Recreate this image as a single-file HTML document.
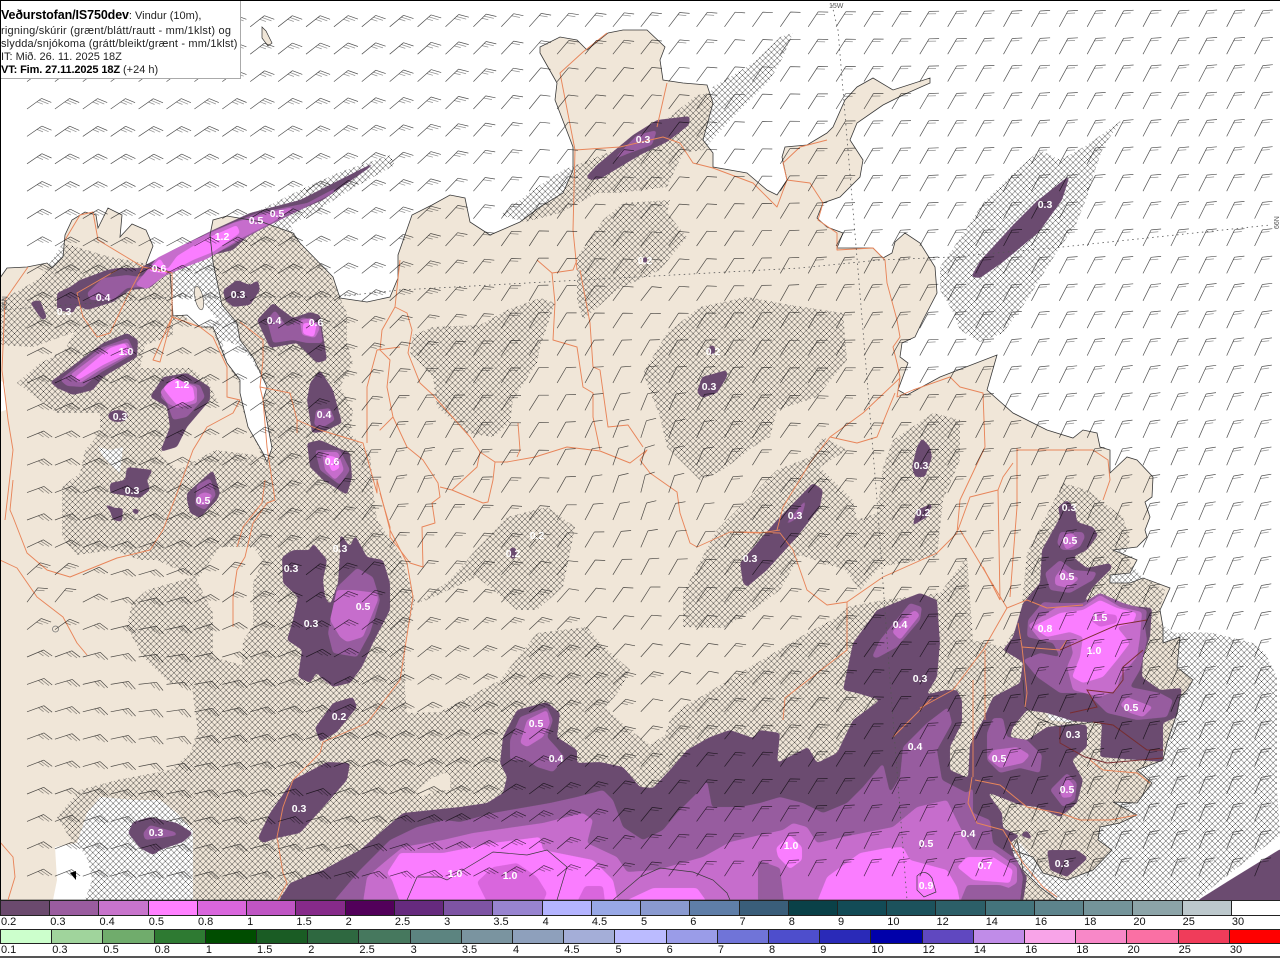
<!DOCTYPE html>
<html lang="is">
<head>
<meta charset="utf-8">
<title>Veðurstofan/IS750dev</title>
<style>
html,body{margin:0;padding:0;background:#fff;width:1280px;height:958px;overflow:hidden}
#wrap{position:relative;width:1280px;height:958px;overflow:hidden;font-family:"Liberation Sans",sans-serif}
#map{position:absolute;left:0;top:0}
#info{position:absolute;left:1px;top:1px;width:240px;height:78px;background:#fff;border-right:1px solid #aaa;border-bottom:1px solid #aaa;font-size:11px;line-height:13px;color:#222;box-sizing:border-box;white-space:nowrap}
#info div{position:absolute;left:0}
#info b.h{font-size:12.5px;color:#000;letter-spacing:-.1px}
.sw{position:absolute;left:0;width:1280px;display:flex;box-sizing:border-box;border-top:1px solid #222;border-bottom:1px solid #222}
.sw i{flex:1;display:block;border-left:1px solid #222;box-sizing:border-box}
.lb{position:absolute;left:0;width:1280px;display:flex;font-size:11px;line-height:13px;color:#111}
.lb span{flex:1;display:block;padding-left:1px;box-sizing:border-box}
#bl{position:absolute;left:0;top:956px;width:1280px;height:2px;background:#555}
text.v{font:bold 10.5px "Liberation Sans",sans-serif;fill:#fff;text-anchor:middle}
text.g{font:7px "Liberation Sans",sans-serif;fill:#555}
.l2{fill:#6b4b70}.l3{fill:#975c9f}.l4{fill:#c66dcc}.l5{fill:#fa7dff}.l8{fill:#d966dd}
.road{fill:none;stroke:#e8855a;stroke-width:.95;stroke-linejoin:round}
</style>
</head>
<body>
<div id="wrap">
<svg id="map" width="1280" height="900" viewBox="0 0 1280 900" xmlns="http://www.w3.org/2000/svg">
<defs>
<pattern id="hx" width="5.8" height="5.8" patternUnits="userSpaceOnUse">
<path d="M0 0L5.8 5.8M5.8 0L0 5.8" stroke="#1e1e1e" stroke-width=".46" fill="none"/>
</pattern>
<filter id="sm" filterUnits="userSpaceOnUse" x="0" y="0" width="1280" height="900" color-interpolation-filters="sRGB">
<feGaussianBlur stdDeviation="1.5"/>
<feComponentTransfer><feFuncA type="linear" slope="7" intercept="-3"/></feComponentTransfer>
</filter>
<path id="land" d="M0,278 7,268 27,267 47,263 52,268 63,257 65,235 72,220 85,212 96,215 98,228 108,208 122,215 120,237 132,224 146,230 153,246 146,264 170,272 172,300 173,316 187,315 200,327 213,327 223,353 227,363 240,380 240,393 248,427 263,453 267,462 272,448 263,400 267,387 253,357 240,340 237,323 222,305 213,262 210,235 213,220 227,216 262,222 293,233 300,243 333,277 340,298 367,302 390,297 398,278 398,255 412,215 432,205 450,195 465,198 470,222 490,235 520,222 540,207 563,193 573,170 573,147 555,100 557,83 540,53 540,47 560,37 577,40 587,50 608,33 623,30 647,30 665,47 660,60 663,80 683,83 707,85 713,103 703,140 713,153 713,167 747,173 767,190 777,195 787,180 782,157 785,147 807,145 827,133 833,127 845,100 857,87 873,78 893,90 930,78 930,83 903,95 883,105 857,123 850,140 863,160 860,177 840,197 823,203 817,218 827,227 843,233 837,248 873,248 883,258 892,253 895,242 905,233 920,243 935,267 937,293 923,320 915,337 902,343 900,357 908,363 898,390 907,395 940,377 997,355 987,390 1013,413 1047,430 1073,438 1083,430 1097,433 1100,447 1110,450 1110,473 1127,457 1137,460 1153,477 1152,497 1145,502 1150,517 1145,530 1147,537 1137,547 1113,550 1137,560 1130,573 1110,575 1110,583 1130,583 1143,578 1170,588 1160,610 1163,627 1163,643 1180,637 1177,667 1193,680 1187,690 1180,697 1177,713 1167,743 1163,760 1137,770 1152,783 1137,803 1113,802 1137,815 1120,823 1100,827 1098,840 1112,850 1093,870 1067,880 1043,873 1033,857 1012,850 1017,840 1023,870 1040,887 1057,900 0,900Z"/>
</defs>

<rect width="1280" height="900" fill="#fff"/>
<use href="#land" fill="#f0e6d8"/>
<polygon points="262,27 266,31 272,43 268,46 262,38" fill="#f0e6d8" stroke="#333" stroke-width=".7"/>
<polygon points="1047,713 1073,720 1073,723 1050,720" fill="#fff"/>
<polygon points="1010,845 1020,843 1030,855 1040,880 1030,875 1015,860" fill="#fff"/>
<!-- glacier -->
<polygon points="87,813 100,797 133,800 160,800 177,813 193,830 193,900 53,900 57,880 55,847 77,843" fill="#fff"/>
<polygon points="98,447 110,450 123,447 120,473 113,467 104,458" fill="#fff"/>

<!-- hatching -->
<g fill="url(#hx)">
<polygon points="0,300 20,290 40,278 63,243 110,257 143,263 173,273 187,257 210,240 250,215 300,190 340,172 390,155 395,165 350,190 310,215 290,225 300,243 330,275 347,313 347,343 353,363 340,387 353,410 350,433 370,453 373,490 377,520 400,553 415,600 405,640 405,690 407,713 440,712 500,680 537,633 587,627 600,643 630,670 620,690 605,708 630,730 650,745 665,735 670,720 683,707 707,693 750,667 807,633 837,617 847,607 883,600 940,593 967,557 973,640 1003,647 1020,623 1027,553 1063,483 1087,490 1123,517 1130,540 1125,555 1140,575 1165,590 1157,620 1173,633 1193,632 1213,633 1253,643 1265,653 1277,677 1277,790 1280,835 1215,885 1197,900 0,900"/>
<polygon points="413,335 433,327 480,325 507,310 540,298 555,303 540,347 537,363 513,400 510,423 493,437 467,433 437,407 433,377 410,353"/>
<polygon points="623,203 670,200 667,213 687,237 660,270 617,290 583,320 577,300 577,257 603,220"/>
<polygon points="643,373 667,333 700,307 747,297 790,305 843,313 847,360 817,397 777,410 770,437 753,447 723,470 700,480 667,447 660,417"/>
<polygon points="450,580 473,553 507,517 547,507 575,527 570,553 563,587 537,610 517,610 493,590 477,577 427,600 417,603"/>
<polygon points="683,627 683,593 717,530 777,470 810,457 823,437 847,450 820,467 853,500 857,520 877,513 883,467 893,440 933,413 960,420 960,460 943,500 937,557 880,567 860,590 845,570 800,555 780,590 753,610 723,628"/>
<polygon points="1122,120 1087,145 1060,160 1040,150 1017,170 983,203 970,223 952,250 940,267 940,290 952,310 960,330 980,342 1003,333 1027,300 1060,247 1075,227 1087,197 1093,177 1103,147"/>
<polygon points="793,33 780,37 753,63 713,87 710,93 697,95 657,127 623,147 563,170 540,185 500,215 525,222 560,213 597,193 617,193 667,187 683,153 703,150 737,113 770,80 783,57"/>
</g>
<!-- un-hatched land -->
<g fill="#f0e6d8">
<polygon points="0,345 33,347 75,332 63,352 40,363 17,383 57,413 100,413 100,433 85,450 80,473 62,487 62,537 77,555 113,550 140,560 157,560 193,577 147,590 132,603 127,627 143,657 170,683 192,687 198,733 190,753 170,770 117,780 80,790 57,817 73,843 73,900 0,900"/>
<polygon points="220,547 253,547 263,560 253,583 253,627 243,640 242,665 213,657 213,613 197,580"/>
<polygon points="173,322 190,320 213,332 225,360 240,385 245,405 227,420 207,380 190,368 140,368 145,345 173,335"/>
<polygon points="200,403 240,403 255,440 268,470 255,455 215,450 178,470 160,455 165,445"/>
<polygon points="417,790 432,778 445,773 450,775 450,790 440,790 420,797"/>
</g>
<!-- un-hatched water -->
<g fill="#fff">
<polygon points="173,297 200,297 217,320 210,326 197,325 183,315 173,315"/>
<polygon points="222,340 237,345 252,360 267,387 263,400 272,448 267,462 263,453 248,427 240,393 240,380 227,363"/>
<polygon points="55,847 77,843 88,860 92,880 85,900 53,900 57,880"/>
<polygon points="0,380 5,384 6,410 0,412"/>
</g>
<ellipse cx="199" cy="298" rx="4" ry="12" transform="rotate(-12 199 298)" fill="#f0e6d8" stroke="#444" stroke-width=".6"/>
<polygon points="70,873 76,871 76,880" fill="#000"/>
<circle cx="55.500" cy="629" r="3" fill="none" stroke="#777" stroke-width=".8"/>

<!-- precipitation -->
<g class="l2" filter="url(#sm)">
<polygon points="278,902 290,883 323,870 360,850 403,813 460,807 487,803 503,793 507,777 500,763 503,737 517,710 547,702 560,713 557,737 577,750 577,763 600,762 623,767 640,787 653,788 670,770 687,750 710,737 730,730 753,738 760,730 780,733 777,763 808,747 817,763 837,753 853,720 880,700 857,693 843,690 853,643 877,610 920,593 937,600 940,643 937,677 923,700 905,725 898,738 917,710 925,695 945,690 957,690 962,700 962,723 950,747 950,770 968,778 970,745 983,720 993,697 1020,683 1023,662 1003,650 1013,637 1023,603 1040,583 1042,550 1057,523 1060,517 1058,507 1067,500 1075,508 1077,522 1093,527 1098,535 1087,550 1073,557 1087,568 1110,563 1112,568 1093,587 1083,603 1100,593 1123,605 1152,608 1150,637 1143,657 1142,677 1160,690 1182,688 1177,717 1163,723 1163,762 1100,757 1102,723 1073,721 1047,713 1027,710 1013,727 1010,737 1027,740 1047,727 1073,724 1087,725 1087,747 1072,760 1083,780 1077,803 1060,817 1037,807 1020,805 987,792 1002,813 1003,828 1013,833 1033,840 1027,830 1010,843 1015,858 1027,877 1023,902"/>
<polygon points="1047,850 1077,850 1088,858 1067,877 1050,870"/>
<polygon points="1282,848 1230,880 1195,902 1282,902"/>
<polygon points="57,293 70,287 80,280 107,270 118,268 140,268 173,250 213,230 250,213 300,200 375,162 372,166 323,200 277,220 247,237 233,250 200,258 167,273 150,288 130,290 113,302 87,310 77,305 73,313 57,310"/>
<polygon points="50,382 67,370 103,343 127,333 138,340 137,357 103,377 93,390 73,395 57,388"/>
<polygon points="150,397 163,377 187,373 210,387 210,400 187,427 177,447 160,452 170,427 167,407"/>
<polygon points="223,290 237,280 250,285 258,280 260,290 250,305 233,307 225,300"/>
<polygon points="257,320 273,303 293,318 310,312 320,315 327,360 317,363 297,343 270,348 263,333"/>
<polygon points="320,370 333,390 342,423 323,432 312,433 307,400 310,383"/>
<polygon points="307,443 320,440 350,453 352,477 347,495 323,480 310,467"/>
<polygon points="110,483 125,480 127,467 153,470 147,480 150,490 140,498 110,493"/>
<polygon points="103,503 115,508 123,508 122,522 113,520 110,511"/>
<polygon points="132,508 140,510 137,515 133,513"/>
<ellipse cx="118" cy="416" rx="10" ry="6"/>
<polygon points="187,493 213,470 220,493 217,500 200,518 190,513 187,500"/>
<polygon points="30,302 40,300 47,318 42,320 33,307"/>
<polygon points="282,557 293,550 310,550 313,543 327,560 323,580 325,597 330,605 338,583 340,553 340,533 350,547 355,535 367,557 383,560 390,583 390,610 373,643 362,667 350,683 333,687 320,677 317,672 310,683 298,677 302,650 287,640 293,620 298,597 283,583"/>
<polygon points="315,728 333,703 353,697 357,707 337,732 320,742"/>
<polygon points="258,838 270,813 293,780 327,762 350,763 347,780 327,803 300,833 277,838 263,843"/>
<polygon points="128,833 133,822 150,817 177,823 193,833 183,842 160,850 153,855 140,848"/>
<polygon points="697,392 702,377 727,370 727,377 717,393 702,398"/>
<ellipse cx="712" cy="350" rx="3.500" ry="5"/>
<ellipse cx="645" cy="260" rx="2.500" ry="3.500"/>
<ellipse cx="513" cy="553" rx="4" ry="6"/>
<polygon points="586,177 597,165 633,135 657,120 690,116 689,125 667,142 640,155 600,179 590,180"/>
<polygon points="971,277 980,261 1013,225 1037,201 1070,175 1062,200 1039,232 1003,262 980,278"/>
<polygon points="917,447 922,438 930,447 932,457 925,477 915,477 912,467"/>
<polygon points="912,527 917,510 933,503 927,517 917,523"/>
<polygon points="743,583 740,563 777,520 813,483 823,490 820,507 797,537 767,570 747,587"/>
</g>
<g class="l3" filter="url(#sm)">
<polygon points="333,902 360,870 390,840 417,827 445,820 460,822 493,813 550,803 577,797 603,790 613,800 623,827 643,840 663,830 677,813 697,793 707,780 712,807 740,807 760,803 780,797 803,803 823,813 847,803 863,787 883,763 890,793 900,777 903,747 927,723 948,707 952,723 937,750 942,780 967,793 973,787 973,813 990,820 993,843 1017,860 1023,877 1020,902"/>
<polygon points="90,300 87,293 103,278 127,275 140,277 173,257 207,233 257,213 307,203 345,183 330,195 260,230 227,248 190,265 167,275 143,287 127,288 113,300"/>
<polygon points="60,380 100,348 128,338 135,353 100,373 83,387 67,386"/>
<polygon points="160,397 170,380 200,385 205,397 187,417 173,420 167,403"/>
<polygon points="267,320 275,310 287,327 303,317 320,323 323,343 307,343 293,340 273,343"/>
<polygon points="316,410 330,408 335,420 322,428 314,425"/>
<polygon points="315,450 340,450 350,470 340,485 320,470"/>
<polygon points="197,485 210,478 216,495 205,510 195,505"/>
<polygon points="328,633 337,587 357,568 373,577 380,600 370,633 357,657 333,653"/>
<polygon points="143,833 150,825 175,832 178,835 160,838 145,840"/>
<polygon points="510,760 510,740 520,717 547,707 553,720 547,737 557,748 565,758 553,772 537,767 527,760"/>
<polygon points="872,657 880,640 910,603 922,607 920,620 897,647 877,658"/>
<polygon points="1057,543 1060,532 1083,532 1085,537 1080,547 1073,550 1062,550"/>
<polygon points="1045,573 1060,560 1073,570 1097,572 1093,580 1070,593 1050,590"/>
<polygon points="1028,620 1043,602 1057,603 1083,603 1100,593 1123,603 1147,610 1145,627 1147,640 1140,670 1130,687 1160,693 1173,700 1167,717 1137,720 1107,713 1087,693 1060,693 1037,677 1023,660 1040,653 1060,657 1053,643 1027,637"/>
<polygon points="987,733 993,718 1003,718 1007,737 1027,740 1042,755 1040,773 1020,768 1000,773 987,760"/>
<polygon points="1050,790 1067,773 1077,783 1075,800 1063,807"/>
<polygon points="613,160 637,135 657,130 652,145 627,154"/>
<polygon points="783,527 807,498 802,515"/>
</g>
<g class="l4" filter="url(#sm)">
<polygon points="363,902 367,877 387,860 403,847 443,840 473,833 543,823 583,813 593,820 587,843 617,857 627,872 657,870 703,857 730,842 760,835 783,830 793,823 807,827 817,843 843,837 893,827 917,807 947,800 960,827 973,850 993,850 1017,867 1017,883 993,897 993,902"/>
<polygon points="135,285 157,258 187,243 233,223 267,213 297,206 273,222 240,239 207,259 167,274 147,289"/>
<polygon points="70,375 107,347 128,342 132,353 100,370 80,383"/>
<polygon points="160,392 173,377 197,387 197,403 177,408 167,403"/>
<polygon points="300,320 312,318 320,328 315,338 302,335"/>
<polygon points="322,452 338,452 344,470 335,480 325,470"/>
<polygon points="198,495 205,492 213,495 206,505 198,505"/>
<polygon points="330,620 337,590 353,590 377,593 378,600 363,637 347,642 340,637"/>
<polygon points="520,743 527,720 547,710 550,723 543,737 527,747"/>
<polygon points="892,632 905,617 915,610 920,615 900,640"/>
<polygon points="1062,540 1068,532 1075,535 1076,545 1066,550"/>
<polygon points="1055,577 1062,568 1070,575 1080,578 1068,588 1055,585"/>
<polygon points="1028,625 1057,607 1083,607 1100,595 1120,607 1142,612 1140,637 1137,657 1120,677 1117,690 1100,697 1073,690 1067,667 1073,653 1070,640 1040,640"/>
<polygon points="1120,705 1127,697 1153,707 1143,717 1130,713"/>
<polygon points="987,758 993,750 1017,747 1030,755 1023,763 1000,768"/>
<polygon points="1060,790 1067,778 1074,785 1072,797 1062,798"/>
</g>
<g class="l3" filter="url(#sm)">
<polygon points="758,860 780,868 784,902 758,902"/>
<polygon points="960,902 967,885 1000,885 1015,890 1018,902"/>
</g>
<g class="l5" filter="url(#sm)">
<polygon points="400,902 392,880 387,873 400,853 443,853 493,843 540,837 543,850 593,860 613,880 618,902"/>
<polygon points="623,902 653,888 697,888 707,902"/>
<polygon points="817,902 827,877 860,853 887,848 903,847 910,860 947,870 957,887 960,902"/>
<polygon points="957,867 967,857 993,857 1013,870 1010,883 973,880"/>
<polygon points="776,848 790,835 802,847 802,860 790,869 778,857"/>
<polygon points="148,271 160,258 167,270 177,256 203,240 237,225 240,233 213,252 193,260 167,274"/>
<polygon points="73,379 110,348 125,343 130,352 103,365 80,379"/>
<polygon points="163,388 175,378 193,387 195,400 177,405 170,397"/>
<polygon points="303,323 317,323 314,337 303,334"/>
<polygon points="325,455 336,457 340,468 332,472"/>
<polygon points="1032,627 1060,613 1083,610 1100,600 1117,608 1137,613 1133,623 1117,627 1130,643 1117,660 1103,677 1083,683 1072,677 1080,657 1083,637 1070,632 1047,637"/>
</g>
<g class="l8" filter="url(#sm)">
<polygon points="477,882 493,867 517,863 537,877 547,893 543,902 487,902"/>
<polygon points="577,902 585,886 603,886 605,902"/>
<polygon points="1090,620 1100,613 1117,615 1117,623 1100,627"/>
</g>

<!-- coast -->
<use href="#land" fill="none" stroke="#3a3a3a" stroke-width=".8"/>
<g fill="none" stroke="#3a3a3a" stroke-width=".7">
<polyline points="407,900 417,877 440,877 447,880 463,870 493,852 527,855 547,850 567,867 557,900"/>
<polyline points="613,900 640,877 660,868 693,872 713,880 727,893 730,900"/>
<path d="M917,876Q925,868 932,878L936,892 924,897 917,890Z"/>
<polyline points="1023,680 1025,707 1037,718 1060,727 1093,722 1113,725 1147,750 1163,750"/>
</g>

<!-- roads -->
<g class="road">
<polyline points="28,267 5,300 2,370 8,420 13,450 5,520"/>
<polyline points="65,240 80,215 93,212 98,240 143,267 172,273 172,317 153,360 160,362 172,317 200,327 213,337 227,367 227,397 240,400 233,413 207,427 193,450 182,480 163,530 150,550 117,558 70,577 47,570 27,553 13,517 10,510 13,480"/>
<polyline points="143,267 127,297 110,333 97,337 83,317 77,293 117,270"/>
<polyline points="0,560 17,568 37,597 63,617 77,643 87,655"/>
<polyline points="240,322 263,340 263,360 260,387 263,400 267,447 270,467 275,500 267,503 253,523 245,557 237,570 233,597 233,627"/>
<polyline points="265,480 262,503 243,527 237,547"/>
<polyline points="260,387 290,393 297,420 297,433"/>
<polyline points="297,420 320,430 363,443 377,493 377,480 390,530 407,563 413,597 400,680 367,723 323,742 320,753 293,780 283,807 277,837 283,873 287,883 278,900"/>
<polyline points="367,443 367,387 377,350 400,347"/>
<polyline points="400,260 395,307 382,330 380,350 390,360 387,387 393,417 380,430 393,417 407,447 423,460 438,483 440,497 432,503 435,523 422,527 423,567 410,563 390,537 390,527 380,493"/>
<polyline points="395,307 407,313 412,330 408,353 420,383 433,395 470,437 480,452 495,462 507,462 535,457 567,447 600,451 630,463 647,450 640,460 650,473 677,492 680,513 690,543 697,547 730,532 760,533 780,530"/>
<polyline points="495,462 493,480 488,502 483,503 452,490 440,487"/>
<polyline points="480,452 477,467 452,490"/>
<polyline points="518,423 520,450 517,457"/>
<polyline points="537,260 552,273 573,270 577,260"/>
<polyline points="552,273 555,303 553,340 577,347 583,387 593,393 593,417 600,450"/>
<polyline points="580,270 590,323 593,367 600,370 608,427 628,425 643,447"/>
<polyline points="577,270 573,230 575,150 560,73 583,52 607,33"/>
<polyline points="575,150 620,147 663,137 680,143 693,163 713,168 753,183 777,207 787,180 783,163 800,147 827,140"/>
<polyline points="667,83 657,127"/>
<polyline points="787,180 810,183 823,203 818,220 837,233 837,250 873,248 885,260 887,283 897,320 900,337 893,347 897,363 900,377 897,397 913,390 950,377 960,387 983,393 985,447 960,500 957,533 937,553 883,577 847,602 827,605 807,590 793,550 780,533 740,532"/>
<polyline points="895,393 877,437 857,443 830,437 810,463 783,507 777,530"/>
<polyline points="900,378 863,413 830,437"/>
<polyline points="960,530 1007,608 1027,600 1047,608 1083,605"/>
<polyline points="983,567 1000,600"/>
<polyline points="998,490 970,497 958,530"/>
<polyline points="1017,450 1093,450 1108,460 1110,480 1103,500"/>
<polyline points="1017,448 1017,507 1010,597"/>
<polyline points="1013,463 1003,477 998,490 1000,600"/>
<polyline points="1018,623 1022,647 1060,650 1067,640"/>
<polyline points="1022,647 1027,693 1025,707"/>
<polyline points="783,720 785,698 847,650 847,602"/>
<polyline points="893,737 933,697"/>
<polyline points="973,680 973,777"/>
<polyline points="920,708 953,690 983,650 1007,608"/>
<polyline points="985,650 985,720"/>
<polyline points="972,777 968,803 977,823 1003,830 1023,863 1043,887 1057,897"/>
<polyline points="975,780 1000,785 1027,807 1060,813 1080,820 1110,820 1137,815"/>
<polyline points="1090,760 1103,770 1137,773 1150,783"/>
<polyline points="0,842 13,857 15,877 8,900"/>
</g>
<g fill="none" stroke="#7a2c30" stroke-width=".95">
<polyline points="1060,650 1117,625 1147,620"/>
<polyline points="1143,650 1123,667 1123,680 1113,693 1087,690 1097,707 1070,713"/>
<polyline points="1060,727 1060,743 1085,757 1107,763 1163,758"/>
<polyline points="1093,722 1113,725 1147,750 1163,750"/>
</g>

<!-- graticule -->
<g fill="none" stroke="#555" stroke-width=".8" stroke-dasharray="1.500 3.500">
<polyline points="0,310 173,297 333,297 400,290 800,268 880,260 952,257 1062,247 1270,225"/>
<polyline points="832,5 838,30 863,330 877,500 890,680 907,900"/>
</g>

<!-- wind barbs -->
<g id="barbs" fill="none" stroke-linecap="butt"></g>

<!-- labels -->
<g>
<text class="v" x="643" y="143">0.3</text><text class="v" x="1045" y="208">0.3</text><text class="v" x="277" y="217">0.5</text><text class="v" x="256" y="224">0.5</text><text class="v" x="222" y="240">1.2</text><text class="v" x="159" y="272">0.6</text><text class="v" x="103" y="301">0.4</text><text class="v" x="64" y="315">0.3</text><text class="v" x="238" y="298">0.3</text><text class="v" x="274" y="324">0.4</text><text class="v" x="316" y="326">0.6</text><text class="v" x="126" y="355">1.0</text><text class="v" x="182" y="388">1.2</text><text class="v" x="120" y="420">0.3</text><text class="v" x="324" y="418">0.4</text><text class="v" x="332" y="465">0.6</text><text class="v" x="132" y="494">0.3</text><text class="v" x="203" y="504">0.5</text><text class="v" x="709" y="390">0.3</text><text class="v" x="713" y="355">0.2</text><text class="v" x="645" y="264">0.2</text><text class="v" x="921" y="469">0.3</text><text class="v" x="923" y="516">0.2</text><text class="v" x="795" y="519">0.3</text><text class="v" x="750" y="562">0.3</text><text class="v" x="1069" y="511">0.3</text><text class="v" x="1070" y="544">0.5</text><text class="v" x="1067" y="580">0.5</text><text class="v" x="1045" y="632">0.8</text><text class="v" x="1100" y="621">1.5</text><text class="v" x="1094" y="654">1.0</text><text class="v" x="1131" y="711">0.5</text><text class="v" x="1073" y="738">0.3</text><text class="v" x="999" y="762">0.5</text><text class="v" x="1067" y="793">0.5</text><text class="v" x="1062" y="867">0.3</text><text class="v" x="900" y="628">0.4</text><text class="v" x="920" y="682">0.3</text><text class="v" x="915" y="750">0.4</text><text class="v" x="968" y="837">0.4</text><text class="v" x="926" y="847">0.5</text><text class="v" x="791" y="849">1.0</text><text class="v" x="985" y="869">0.7</text><text class="v" x="926" y="889">0.9</text><text class="v" x="510" y="879">1.0</text><text class="v" x="455" y="877">1.0</text><text class="v" x="299" y="812">0.3</text><text class="v" x="156" y="836">0.3</text><text class="v" x="339" y="720">0.2</text><text class="v" x="536" y="727">0.5</text><text class="v" x="556" y="762">0.4</text><text class="v" x="291" y="572">0.3</text><text class="v" x="340" y="552">0.3</text><text class="v" x="363" y="610">0.5</text><text class="v" x="311" y="627">0.3</text><text class="v" x="513" y="557">0.2</text><text class="v" x="537" y="539">0.2</text>
<text class="g" x="829" y="8">15W</text>
<text class="g" transform="translate(1279,229) rotate(-90)">66N</text>
<text class="g" transform="translate(7,309) rotate(-90)">66N</text>
</g>
<rect x="0" y="0" width="1280" height="1" fill="#000"/>
<rect x="0" y="0" width="1" height="900" fill="#000"/>
</svg>

<div id="info">
<div style="top:8px"><b class="h">Veðurstofan/IS750dev</b>: Vindur (10m),</div>
<div style="top:24px;letter-spacing:.21px">rigning/skúrir (grænt/blátt/rautt - mm/1klst) og</div>
<div style="top:37px;letter-spacing:.17px">slydda/snjókoma (grátt/bleikt/grænt - mm/1klst)</div>
<div style="top:50px">IT: Mið. 26. 11. 2025 18Z</div>
<div style="top:63px"><b style="color:#000;letter-spacing:-.12px">VT: Fim. 27.11.2025 18Z</b> (+24 h)</div>
</div>

<div class="sw" style="top:900px;height:16px">
<i style="background:#6b4a6e"></i><i style="background:#9a5c9f"></i><i style="background:#c874cc"></i><i style="background:#ff80ff"></i><i style="background:#d966dd"></i><i style="background:#bf55c4"></i><i style="background:#862a8a"></i><i style="background:#52005a"></i><i style="background:#662a7e"></i><i style="background:#7e54a4"></i><i style="background:#9884d0"></i><i style="background:#b4b4ff"></i><i style="background:#98a8e6"></i><i style="background:#8a9ad0"></i><i style="background:#5f7ea8"></i><i style="background:#3a5e7a"></i><i style="background:#0a4148"></i><i style="background:#124b56"></i><i style="background:#1c525c"></i><i style="background:#2c5f68"></i><i style="background:#44747c"></i><i style="background:#5d848c"></i><i style="background:#74949a"></i><i style="background:#8ca4a8"></i><i style="background:#bcc8cc"></i><i style="background:#fff"></i>
</div>
<div class="lb" style="top:916px"><span>0.2</span><span>0.3</span><span>0.4</span><span>0.5</span><span>0.8</span><span>1</span><span>1.5</span><span>2</span><span>2.5</span><span>3</span><span>3.5</span><span>4</span><span>4.5</span><span>5</span><span>6</span><span>7</span><span>8</span><span>9</span><span>10</span><span>12</span><span>14</span><span>16</span><span>18</span><span>20</span><span>25</span><span>30</span></div>
<div class="sw" style="top:929px;height:15px">
<i style="background:#ccffcc"></i><i style="background:#a0d49c"></i><i style="background:#70ac6c"></i><i style="background:#2e7a32"></i><i style="background:#004d00"></i><i style="background:#1a5c24"></i><i style="background:#2e6840"></i><i style="background:#46785e"></i><i style="background:#5c8480"></i><i style="background:#7a94a0"></i><i style="background:#8ea0bc"></i><i style="background:#a4aed8"></i><i style="background:#bbbbff"></i><i style="background:#9a9ce8"></i><i style="background:#7074d8"></i><i style="background:#4e4ecc"></i><i style="background:#2a2ab8"></i><i style="background:#0000aa"></i><i style="background:#6048c0"></i><i style="background:#c08ce8"></i><i style="background:#f8a4e8"></i><i style="background:#f888c8"></i><i style="background:#fa70a4"></i><i style="background:#f03c5a"></i><i style="background:#ff0000"></i>
</div>
<div class="lb" style="top:944px"><span>0.1</span><span>0.3</span><span>0.5</span><span>0.8</span><span>1</span><span>1.5</span><span>2</span><span>2.5</span><span>3</span><span>3.5</span><span>4</span><span>4.5</span><span>5</span><span>6</span><span>7</span><span>8</span><span>9</span><span>10</span><span>12</span><span>14</span><span>16</span><span>18</span><span>20</span><span>25</span><span>30</span></div>
<div id="bl"></div>
</div>
<script>
(function(){
var xs=[0,150,300,400,520,640,800,1000,1280],ys=[50,300,480,680,850];
var T=[[38,38,38,40,48,52,56,61,63],[30,25,32,42,60,52,62,62,65],[19,25,45,70,55,78,50,65,68],[22,5,22,35,38,45,50,65,68],[25,15,15,17,35,52,62,68,68]];
function idx(a,v){var i=0;while(i<a.length-2&&v>a[i+1])i++;return i}
function cl(t){return t<0?0:t>1?1:t}
function ang(x,y){
 var i=idx(xs,x),j=idx(ys,y),u=cl((x-xs[i])/(xs[i+1]-xs[i])),v=cl((y-ys[j])/(ys[j+1]-ys[j]));
 var a=T[j][i]*(1-u)*(1-v)+T[j][i+1]*u*(1-v)+T[j+1][i]*(1-u)*v+T[j+1][i+1]*u*v;
 var d=(x-40)*(x-40)+(y-600)*(y-600);a+=38*Math.exp(-d/1500);
 d=(x-235)*(x-235)+(y-570)*(y-570);a+=22*Math.exp(-d/2500);
 return a;
}
var dark="",lite="";
for(var r=-3;r<=28;r++){
 var y=109+27.4*r;
 for(var c=0;c<45;c++){
  var x=27+27.9*c;
  var t=ang(x,y),th=t*Math.PI/180,ca=Math.cos(th),sa=Math.sin(th);
  var L=18,tx=x+L*ca,ty=y-L*sa;
  dark+="M"+x.toFixed(1)+" "+y.toFixed(1)+"L"+tx.toFixed(1)+" "+ty.toFixed(1);
  var ph=(t-58)*Math.PI/180,bx=Math.cos(ph),by=-Math.sin(ph);
  var single=t>=46&&((x>520&&x<720&&y>60&&y<720)||(x>=720&&x<790&&y<400));
  var ls=single?[10]:t<46?[10.5,10,6.5]:[10,8.5];
  for(var k=0;k<ls.length;k++){
   var sx=tx-k*2.9*ca,sy=ty+k*2.9*sa;
   var seg="M"+sx.toFixed(1)+" "+sy.toFixed(1)+"l"+(ls[k]*bx).toFixed(1)+" "+(ls[k]*by).toFixed(1);
   if(k==0)dark+=seg;else lite+=seg;
  }
 }
}
document.getElementById("barbs").innerHTML='<path d="'+lite+'" stroke="#000" stroke-opacity=".42" stroke-width=".75"/><path d="'+dark+'" stroke="#000" stroke-opacity=".68" stroke-width=".7"/>';
})();
</script>
</body>
</html>
